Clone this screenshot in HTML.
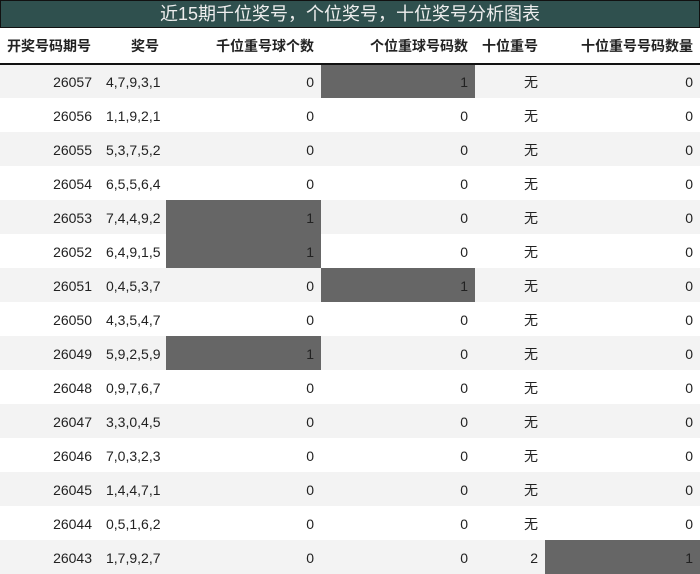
<!DOCTYPE html><html><head><meta charset="utf-8"><style>
body{margin:0;width:700px;height:571px;overflow:hidden;background:#fff;font-family:"Liberation Sans","Noto Sans CJK SC",sans-serif;font-size:14px;color:#222}
.t{position:absolute;left:0;top:0;width:698px;height:26px;background:#2f504e;border:1px solid #111;color:#eee;font-size:18px;text-align:center;line-height:27px}
table{position:absolute;left:0;top:28px;border-collapse:collapse;width:700px;table-layout:fixed}
th{height:36px;font-weight:bold;font-size:14px;text-align:right;padding:0 7px;border-bottom:2px solid #111;box-sizing:border-box}
td{height:34px;padding:1px 7px 0;text-align:right;box-sizing:border-box}
tr:nth-child(odd) td{background:#f3f3f3}
td.g{background:#666!important}
td.l{text-align:left}
</style></head><body>
<div class="t">近15期千位奖号，个位奖号，十位奖号分析图表</div>
<table>
<colgroup><col style="width:99px"><col style="width:67px"><col style="width:155px"><col style="width:154px"><col style="width:70px"><col style="width:155px"></colgroup>
<thead><tr><th style="text-align:left">开奖号码期号</th><th>奖号</th><th>千位重号球个数</th><th>个位重球号码数</th><th>十位重号</th><th>十位重号号码数量</th></tr></thead>
<tbody>
<tr><td>26057</td><td class="l">4,7,9,3,1</td><td>0</td><td class="g">1</td><td>无</td><td>0</td></tr>
<tr><td>26056</td><td class="l">1,1,9,2,1</td><td>0</td><td>0</td><td>无</td><td>0</td></tr>
<tr><td>26055</td><td class="l">5,3,7,5,2</td><td>0</td><td>0</td><td>无</td><td>0</td></tr>
<tr><td>26054</td><td class="l">6,5,5,6,4</td><td>0</td><td>0</td><td>无</td><td>0</td></tr>
<tr><td>26053</td><td class="l">7,4,4,9,2</td><td class="g">1</td><td>0</td><td>无</td><td>0</td></tr>
<tr><td>26052</td><td class="l">6,4,9,1,5</td><td class="g">1</td><td>0</td><td>无</td><td>0</td></tr>
<tr><td>26051</td><td class="l">0,4,5,3,7</td><td>0</td><td class="g">1</td><td>无</td><td>0</td></tr>
<tr><td>26050</td><td class="l">4,3,5,4,7</td><td>0</td><td>0</td><td>无</td><td>0</td></tr>
<tr><td>26049</td><td class="l">5,9,2,5,9</td><td class="g">1</td><td>0</td><td>无</td><td>0</td></tr>
<tr><td>26048</td><td class="l">0,9,7,6,7</td><td>0</td><td>0</td><td>无</td><td>0</td></tr>
<tr><td>26047</td><td class="l">3,3,0,4,5</td><td>0</td><td>0</td><td>无</td><td>0</td></tr>
<tr><td>26046</td><td class="l">7,0,3,2,3</td><td>0</td><td>0</td><td>无</td><td>0</td></tr>
<tr><td>26045</td><td class="l">1,4,4,7,1</td><td>0</td><td>0</td><td>无</td><td>0</td></tr>
<tr><td>26044</td><td class="l">0,5,1,6,2</td><td>0</td><td>0</td><td>无</td><td>0</td></tr>
<tr><td>26043</td><td class="l">1,7,9,2,7</td><td>0</td><td>0</td><td>2</td><td class="g">1</td></tr>
</tbody></table>
</body></html>
